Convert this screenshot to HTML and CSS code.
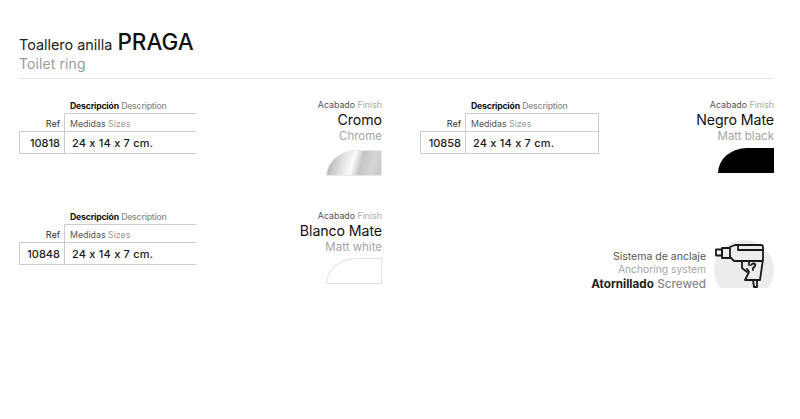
FILE: index.html
```html
<!DOCTYPE html>
<html lang="es">
<head>
<meta charset="utf-8">
<title>Toallero anilla PRAGA</title>
<link rel="stylesheet" href="styles.css">
</head>
<body>
<main class="page">
  <header class="head">
    <h1 class="title">Toallero anilla <strong>PRAGA</strong></h1>
    <p class="subtitle">Toilet ring</p>
  </header>
  <section class="grid">
    <article class="item">
      <div class="spec">
        <div class="desc"><b>Descripción</b> <span>Description</span></div>
        <div class="row-a"><div class="ref-h">Ref</div><div class="sizes">Medidas <span>Sizes</span></div></div>
        <div class="row-b"><div class="ref">10818</div><div class="val">24 x 14 x 7 cm.</div></div>
      </div>
      <div class="finish">
        <div class="f-label">Acabado <span>Finish</span></div>
        <div class="f-name">Cromo</div>
        <div class="f-en">Chrome</div>
        <div class="swatch chrome"></div>
      </div>
    </article>
    <article class="item item-r">
      <div class="spec closed">
        <div class="desc"><b>Descripción</b> <span>Description</span></div>
        <div class="row-a"><div class="ref-h">Ref</div><div class="sizes">Medidas <span>Sizes</span></div></div>
        <div class="row-b"><div class="ref">10858</div><div class="val">24 x 14 x 7 cm.</div></div>
      </div>
      <div class="finish">
        <div class="f-label">Acabado <span>Finish</span></div>
        <div class="f-name">Negro Mate</div>
        <div class="f-en">Matt black</div>
        <div class="swatch black"></div>
      </div>
    </article>
    <article class="item">
      <div class="spec">
        <div class="desc"><b>Descripción</b> <span>Description</span></div>
        <div class="row-a"><div class="ref-h">Ref</div><div class="sizes">Medidas <span>Sizes</span></div></div>
        <div class="row-b"><div class="ref">10848</div><div class="val">24 x 14 x 7 cm.</div></div>
      </div>
      <div class="finish">
        <div class="f-label">Acabado <span>Finish</span></div>
        <div class="f-name">Blanco Mate</div>
        <div class="f-en">Matt white</div>
        <div class="swatch white"></div>
      </div>
    </article>
    <article class="anchor">
      <div class="a-text">
        <div class="a-es">Sistema de anclaje</div>
        <div class="a-en">Anchoring system</div>
        <div class="a-type"><b>Atornillado</b> <span>Screwed</span></div>
      </div>
      <div class="a-icon">
        <svg class="drill" width="62" height="51" viewBox="0 0 62 51" fill="none" stroke="#1a1a1a" stroke-width="1.8" stroke-linejoin="round" stroke-linecap="round">
          <path d="M2 12.500H8V18.500H2Z"/>
          <path d="M8 11H16V21H8Z"/>
          <path d="M16 10L21 8H47Q49 8 49 10V22L46 43H31L35 35L33 32"/>
          <path d="M16 20L20 24H48.500"/>
          <path d="M24 8V13H48.500"/>
          <path d="M28 24V31L33 35"/>
          <path d="M35 24V28"/>
          <path d="M39 43L40 50H43V43"/>
          <path d="M37 28Q39 25.500 41 27Q42 29 39 31V33"/>
        </svg>
      </div>
    </article>
  </section>
</main>
</body>
</html>
```

FILE: styles.css
```css
* { box-sizing: border-box; }
html, body { margin: 0; padding: 0; background: #fff; }
body { font-family: "Inter", "Liberation Sans", sans-serif; color: #1c1c1c; }
.page { width: 800px; height: 419px; overflow: hidden; padding: 30px 26px 0 19px; }
.head { height: 49px; border-bottom: 1px solid #e4e4e4; }
.title { margin: 0; font-size: 14.4px; font-weight: 400; line-height: 23px; color: #222; }
.title strong { font-size: 22.500px; font-weight: 500; margin-left: 1px; color: #111; }
.subtitle { margin: 0; font-size: 14px; line-height: 15px; letter-spacing: 0.1px; color: #9a9a9a; }
.grid { display: grid; grid-template-columns: 363px 354px; column-gap: 38px; grid-auto-rows: 111px; padding-top: 20px; }
.item { display: flex; justify-content: space-between; align-items: flex-start; }
.spec { width: 177px; }
.spec.closed { width: 179px; }
.desc { padding-left: 51px; height: 14px; line-height: 14px; font-size: 8.700px; letter-spacing: -0.2px; }
.desc b { font-weight: 700; color: #111; }
.desc span { color: #8a8a8a; font-weight: 500; }
.row-a { display: flex; height: 18px; border-top: 1px solid #ccc; margin-left: 45px; position: relative; }
.ref-h { position: absolute; right: 100%; width: 45px; padding-right: 4px; text-align: right; line-height: 19px; color: #333; font-size: 9px; }
.sizes { flex: 1; border-left: 1px solid #ccc; padding-left: 5px; line-height: 19px; color: #555; font-size: 8.800px; }
.sizes span { color: #999; }
.row-b { display: flex; height: 23px; border: solid #ccc; border-width: 1px 0 1px 1px; }
.closed .row-a, .closed .row-b { border-right: 1px solid #ccc; }
.ref { width: 45px; padding-right: 4px; border-right: 1px solid #ccc; text-align: right; line-height: 22px; font-size: 11px; font-weight: 500; color: #222; }
.val { padding-left: 7px; line-height: 22px; font-size: 11px; font-weight: 500; letter-spacing: 0.2px; color: #1a1a1a; }
.finish { display: flex; flex-direction: column; align-items: flex-end; text-align: right; margin-top: -1px; }
.f-label { font-size: 8.800px; line-height: 14px; color: #555; }
.f-label span { color: #aaa; }
.f-name { font-size: 14.200px; line-height: 16px; color: #111; letter-spacing: -0.1px; }
.f-en { font-size: 11.500px; line-height: 16px; color: #a5a5a5; }
.swatch { width: 56px; height: 26px; margin-top: 6px; border-top-left-radius: 30px 26px; }
.chrome { background: linear-gradient(105deg, #a6a6a6 0%, #dedede 28%, #fbfbfb 48%, #c4c4c4 62%, #d6d6d6 82%, #c8c8c8 100%); border: 1px solid #e8e8e8; }
.black { background: #000; height: 25px; margin-top: 4px; }
.white { background: #fff; border: 1px solid #e2e2e2; margin-top: 3px; }
.anchor { display: flex; justify-content: flex-end; align-items: flex-start; gap: 8px; padding-top: 30px; }
.a-text { text-align: right; padding-top: 11px; }
.a-es { font-size: 10.500px; line-height: 12px; color: #555; }
.a-en { font-size: 10.300px; line-height: 12px; color: #a5a5a5; }
.a-type { font-size: 11.700px; line-height: 17px; margin-top: 1px; }
.a-type b { font-weight: 700; color: #222; }
.a-type span { color: #888; font-weight: 500; }
.a-icon { width: 60px; height: 48px; position: relative; }
.a-icon::before { content: ""; position: absolute; left: 0; top: 0; width: 60px; height: 60px; border-radius: 50%; background: #ececec; clip-path: inset(0 0 12px 0); }
.drill { position: absolute; left: 0; top: -3px; }
```
